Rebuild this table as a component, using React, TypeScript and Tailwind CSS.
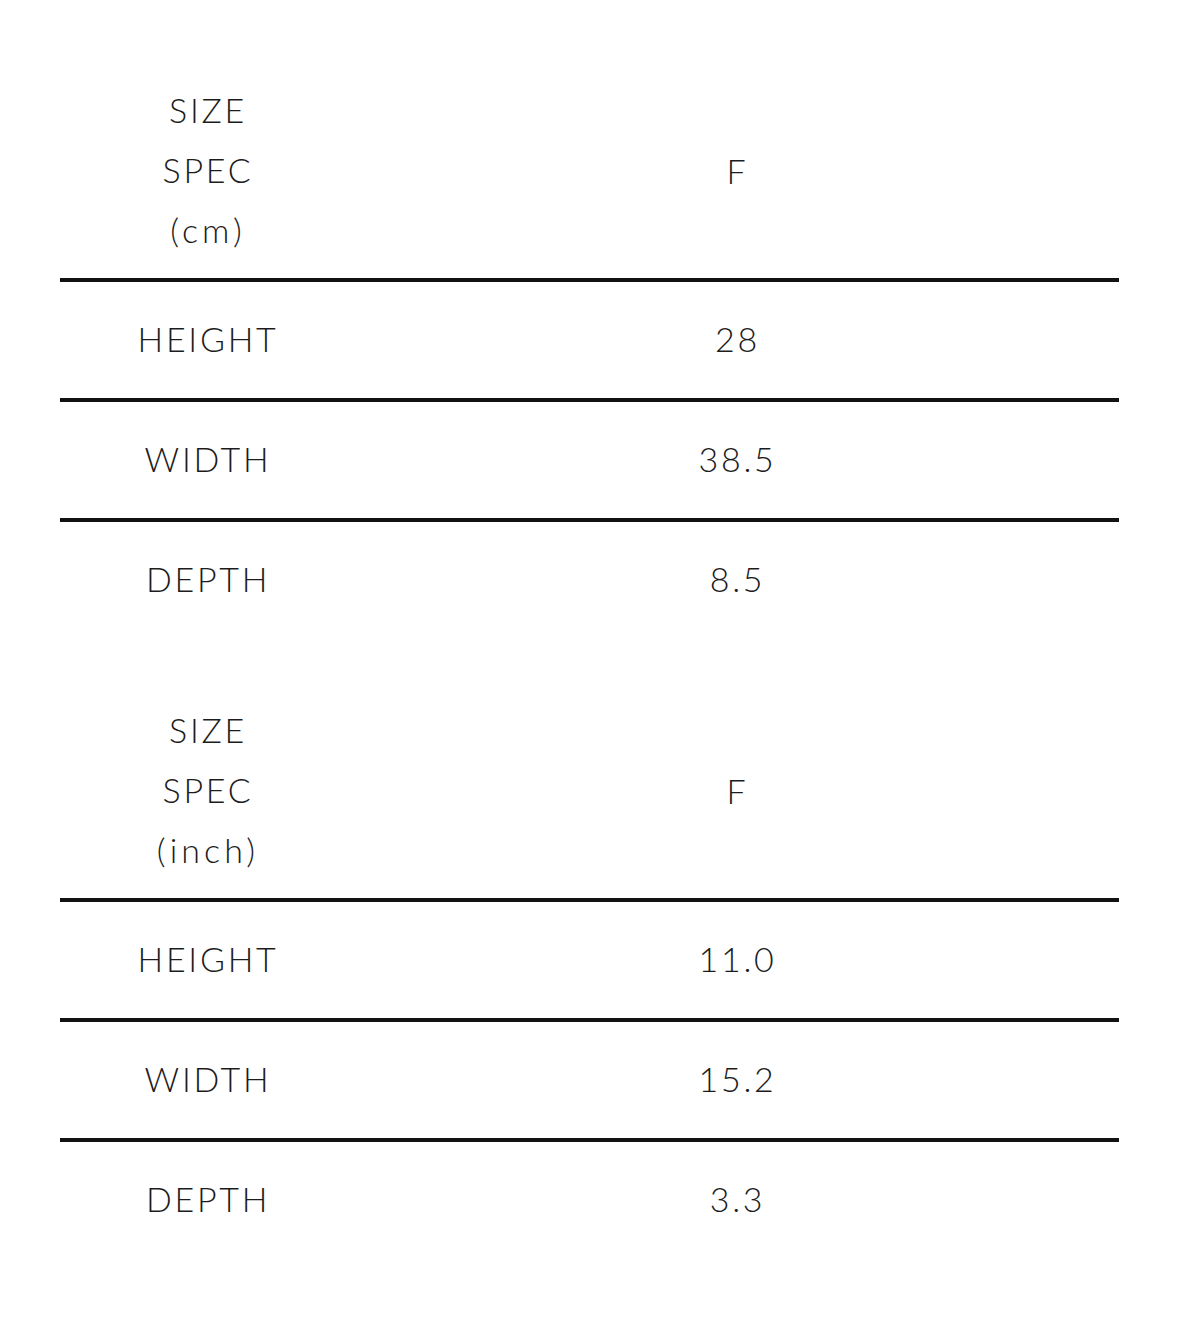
import React from "react";

type Row = { label: string; value: string };

const tables: { unit: string; rows: Row[] }[] = [
  {
    unit: "(cm)",
    rows: [
      { label: "HEIGHT", value: "28" },
      { label: "WIDTH", value: "38.5" },
      { label: "DEPTH", value: "8.5" },
    ],
  },
  {
    unit: "(inch)",
    rows: [
      { label: "HEIGHT", value: "11.0" },
      { label: "WIDTH", value: "15.2" },
      { label: "DEPTH", value: "3.3" },
    ],
  },
];

function SpecTable({ unit, rows }: { unit: string; rows: Row[] }) {
  return (
    <div className="flex flex-col">
      {/* header */}
      <div className="flex h-[216px] items-center">
        <div className="w-[296px] flex flex-col items-center leading-[60px]">
          <span>SIZE</span>
          <span>SPEC</span>
          <span className="tracking-[0.12em]">{unit}</span>
        </div>
        <div className="flex-1 text-center">F</div>
      </div>
      {rows.map((r) => (
        <div key={r.label} className="flex items-center h-[120px] pb-[4px] border-t-4 border-[#121212]">
          <div className="w-[296px] text-center">{r.label}</div>
          <div className="flex-1 text-center">{r.value}</div>
        </div>
      ))}
    </div>
  );
}

export default function App() {
  return (
    <div
      className="min-h-[1335px] w-[1179px] bg-white pl-[60px] pr-[60px] pt-[62px] text-[34px] font-light tracking-[0.08em] text-[#1c1c1c]"
      style={{ fontFamily: "Lato, 'Open Sans', sans-serif" }}
    >
      <div className="flex flex-col gap-[44px]">
        {tables.map((t) => (
          <SpecTable key={t.unit} unit={t.unit} rows={t.rows} />
        ))}
      </div>
    </div>
  );
}
